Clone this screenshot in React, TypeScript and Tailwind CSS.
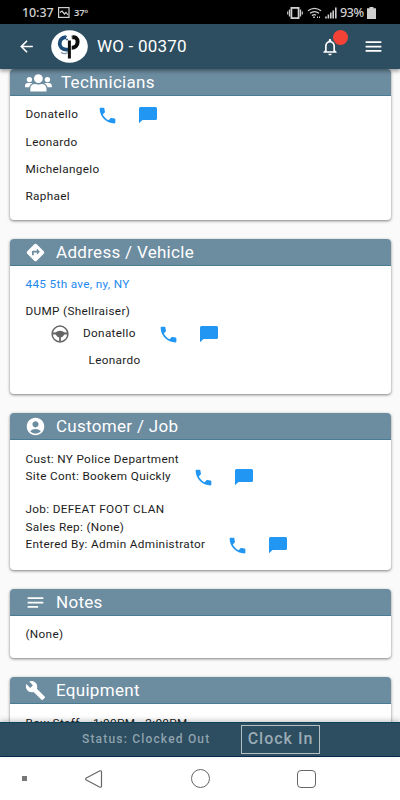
import type { ReactNode } from 'react'
import {
  MdAccountCircle,
  MdArrowBack,
  MdBuild,
  MdDirections,
  MdLocalPhone,
  MdMenu,
  MdNotes,
  MdNotificationsNone,
} from 'react-icons/md'

const technicians = ['Leonardo', 'Michelangelo', 'Raphael']

function ContactActions() {
  return (
    <div className="flex items-center gap-[21px] text-[#2196f3]">
      <button aria-label="Call">
        <MdLocalPhone className="w-[21px] h-[21px]" />
      </button>
      <button aria-label="Message">
        <svg width="18" height="17" viewBox="0 0 18 17" fill="currentColor">
          <path d="M1.5 0h15A1.500 1.500 0 0 1 18 1.500v10a1.500 1.500 0 0 1-1.500 1.500H3.500L0 16.300V1.500A1.500 1.500 0 0 1 1.500 0z" />
        </svg>
      </button>
    </div>
  )
}

function Card({ icon, title, className = '', children }: {
  icon: ReactNode
  title: string
  className?: string
  children: ReactNode
}) {
  return (
    <section className={`shrink-0 flex flex-col bg-white rounded overflow-hidden shadow-[0_1px_3px_rgba(0,0,0,0.5)] ${className}`}>
      <header className="h-[27px] shrink-0 flex items-center gap-2.5 bg-[#6c8c9f] border-b border-[#497b93] text-white pl-[15px]">
        {icon}
        <h2 className="text-[17px] leading-[26px] tracking-[0.3px] whitespace-nowrap">{title}</h2>
      </header>
      {children}
    </section>
  )
}

function UsersIcon() {
  return (
    <svg width="27" height="18" viewBox="0 0 27 18" fill="currentColor" className="mt-0.5 -mr-px">
      <circle cx="13.4" cy="4.6" r="4.4" />
      <circle cx="4.4" cy="5.6" r="2.7" />
      <circle cx="22.4" cy="5.6" r="2.7" />
      <path d="M5.3 17.5v-2.4c0-3.4 2-5.1 4.6-5.1 1 0 1.700.6 3.500.6s2.500-.6 3.500-.6c2.600 0 4.600 1.700 4.600 5.100v2.400z" />
      <path d="M0 13.300v-1.800C0 9.800 1.200 8.900 2.700 8.900h3.500c.5 0 .9.1 1.300.3-1.700.9-2.900 2.300-3.200 4.100zM26.800 13.300v-1.800c0-1.700-1.200-2.600-2.700-2.600h-3.500c-.5 0-.9.1-1.300.3 1.700.9 2.900 2.300 3.200 4.100z" />
    </svg>
  )
}

function SteeringWheelIcon() {
  return (
    <svg width="18" height="18" viewBox="0 0 18 18" fill="none" stroke="#666" className="shrink-0 -mt-px">
      <circle cx="9" cy="9" r="7.900" strokeWidth="1.500" />
      <path d="M4.300 7.600Q9 4 13.700 7.600L13 10Q11.600 12.600 9 12.600T5 10z" fill="#666" stroke="none" />
      <path d="M1.500 8.500h4M12.500 8.500h4M9 12v4.500" strokeWidth="1.800" />
    </svg>
  )
}

function Logo() {
  return (
    <svg width="37" height="33" viewBox="0 0 37 33" className="shrink-0">
      <ellipse cx="18.500" cy="16.500" rx="18.300" ry="16.200" fill="#fff" />
      <path d="M15 7.200C10.500 7.500 8.700 10.500 8.700 13.600s2.300 5.800 6.300 6h2" fill="none" stroke="#1e4c78" strokeWidth="3.800" />
      <path d="M10 22.300Q13.500 25 17 22.500" fill="none" stroke="#7d95aa" strokeWidth="1.200" />
      <path d="M14.500 6.500h1.500M15 9.500h2" stroke="#4a6c8e" strokeWidth="1.300" />
      <path d="M20.500 7.400c4-.8 6.100 1 6.100 4.400s-2.600 6-5.900 6" fill="none" stroke="#0b0b0b" strokeWidth="4" />
      <path d="M18.400 10.500v18" stroke="#111" strokeWidth="3" />
      <path d="M20.800 4.800v5.500" stroke="#fff" strokeWidth="0.800" />
    </svg>
  )
}

function StatusBar() {
  return (
    <div className="h-6 shrink-0 bg-black text-[#d0d0d0] flex items-center justify-between pl-[22px] pr-6 font-['Noto_Sans',sans-serif]">
      <div className="flex items-center pt-px">
        <span className="text-[12.500px] leading-6 font-medium w-[31px] whitespace-nowrap tracking-[-0.1px]">10:37</span>
        <svg width="12" height="11" viewBox="0 0 12 11" fill="none" stroke="currentColor" strokeWidth="1.200" className="ml-[5px]">
          <rect x="0.600" y="0.600" width="10.400" height="9.800" />
          <path d="M2 5.500l2-1.500 2.500 3L8 5.500l2 2.500" />
        </svg>
        <span className="ml-1 text-[9.500px] leading-6 font-semibold tracking-[-0.3px]">37°</span>
      </div>
      <div className="flex items-center pt-px">
        <svg width="16" height="12" viewBox="0 0 16 12" fill="none" stroke="currentColor" className="mr-px">
          <rect x="4.400" y="0.900" width="7.200" height="10.200" strokeWidth="1.800" />
          <path d="M2.500 2.500v7M13.500 2.500v7" strokeWidth="1.300" />
          <path d="M.7 4.500v3M15.300 4.500v3" strokeWidth="1.100" />
        </svg>
        <svg width="15" height="12" viewBox="0 0 15 12" fill="none" stroke="currentColor" strokeWidth="1.300" className="ml-[3px]">
          <path d="M1 3.800Q7.500-1.200 14 3.800M3 6.300Q7.500 2.800 12 6.300M5 8.600Q7.500 6.800 9 8.200" />
          <path d="M6.200 10.300h1.600M10 10.300h1M12 10.300h1" strokeWidth="1.600" />
        </svg>
        <svg width="12" height="12" viewBox="0 0 12 12" stroke="currentColor" strokeWidth="1.600" className="ml-[3px]">
          <path d="M1 11.500v-2M3.400 11.500V7.500M5.800 11.500v-6M8.200 11.500v-8M10.800 11.500V.5" />
        </svg>
        <span className="ml-[3px] text-[12.500px] leading-6 font-medium w-[24px] whitespace-nowrap tracking-[-0.400px]">93%</span>
        <svg width="9" height="12" viewBox="0 0 9 12" fill="currentColor" className="ml-[3px]">
          <path d="M2.500 0h4v1.200H9V12H0V1.200h2.500z" />
        </svg>
      </div>
    </div>
  )
}

export default function App() {
  return (
    <div className="w-[400px] h-[800px] flex flex-col overflow-hidden bg-[#fafafa] font-[Roboto,sans-serif] text-[11.750px] tracking-[0.330px] text-[#1c1c1c]">
      <StatusBar />

      {/* App bar */}
      <div className="relative z-10 h-[45px] shrink-0 flex items-center bg-[#2d4d60] text-white pl-[17px] pr-4 shadow-[0_2px_4px_rgba(0,0,0,0.4)]">
        <MdArrowBack className="w-[19px] h-[19px]" />
        <div className="ml-[15px]">
          <Logo />
        </div>
        <h1 className="ml-[9px] text-[17px] tracking-[0.2px] whitespace-nowrap">WO - 00370</h1>
        <div className="relative ml-auto">
          <MdNotificationsNone className="w-5 h-5" />
          <span className="absolute -top-[7px] left-[13px] w-[15px] h-[15px] rounded-full bg-[#f44336]" />
        </div>
        <MdMenu className="w-[21px] h-[21px] ml-[23px]" />
      </div>

      {/* Cards */}
      <main className="flex-1 min-h-0 overflow-hidden flex flex-col gap-[19px] pl-2.5 pr-[9px]">
        <Card icon={<UsersIcon />} title="Technicians" className="h-[151px]">
          <div className="pt-[5px] pl-[15.500px]">
            <div className="h-7 flex items-center">
              <span className="w-[71.500px]">Donatello</span>
              <ContactActions />
            </div>
            {technicians.map(name => (
              <div key={name} className="h-[27px] flex items-center">{name}</div>
            ))}
          </div>
        </Card>

        <Card icon={<MdDirections className="w-[21px] h-[21px]" />} title="Address / Vehicle" className="h-[155px]">
          <div className="pt-[5px] pl-[15.500px]">
            <div className="h-[27px] flex items-center text-[#2389ee]">445 5th ave, ny, NY</div>
            <div className="h-[27px] flex items-center">DUMP (Shellraiser)</div>
            <div className="h-[18px] flex items-center pl-[25.500px]">
              <SteeringWheelIcon />
              <span className="ml-3.5 w-[75px]">Donatello</span>
              <ContactActions />
            </div>
            <div className="h-9 flex items-center pl-[63px]">Leonardo</div>
          </div>
        </Card>

        <Card icon={<MdAccountCircle className="w-[21px] h-[21px]" />} title="Customer / Job" className="h-[157px]">
          <div className="pt-[11px] pl-[15.500px] whitespace-nowrap">
            <div className="h-[17px] flex items-center">Cust: NY Police Department</div>
            <div className="h-[18px] flex items-center">
              <span className="w-[167.500px]">Site Cont: Bookem Quickly</span>
              <ContactActions />
            </div>
            <div className="h-[18px] flex items-center mt-[15px]">Job: DEFEAT FOOT CLAN</div>
            <div className="h-[17px] flex items-center">Sales Rep: (None)</div>
            <div className="h-[18px] flex items-center">
              <span className="w-[201.500px]">Entered By: Admin Administrator</span>
              <ContactActions />
            </div>
          </div>
        </Card>

        <Card icon={<MdNotes className="w-[21px] h-[21px]" />} title="Notes" className="h-[69px]">
          <div className="pt-[5px] pl-[15.500px]">
            <div className="h-[27px] flex items-center">(None)</div>
          </div>
        </Card>

        <Card icon={<MdBuild className="w-[21px] h-[21px]" />} title="Equipment" className="h-[120px]">
          <div className="pt-1.5 pl-[15.500px]">
            <div className="h-[27px] flex items-center whitespace-pre">Bow Staff -  1:00PM - 2:00PM</div>
          </div>
        </Card>
      </main>

      {/* Clock bar */}
      <div className="relative z-10 h-[35px] shrink-0 flex items-center bg-[#2d4d60] border-t border-b border-t-[#0c4359] border-b-[#06294d] text-[#9aabb4] font-medium pl-[82px] shadow-[0_-2px_5px_rgba(0,0,0,0.2)]">
        <span className="w-[159px] -mt-0.5 text-[12px] tracking-[1.180px] whitespace-nowrap text-[#8fa3ae]">Status: Clocked Out</span>
        <button className="w-[79px] h-[29px] -mt-px pb-px border border-[#b3bfc3] text-[16px] leading-none font-medium tracking-[1px] whitespace-nowrap">Clock In</button>
      </div>

      {/* Android navigation */}
      <nav className="h-[43px] shrink-0 bg-white flex items-center pl-[22px] text-[#666]">
        <span className="w-[5px] h-[5px] bg-[#777]" />
        <svg width="18" height="18" viewBox="0 0 18 18" fill="none" stroke="currentColor" strokeWidth="1.200" strokeLinejoin="round" className="ml-[58px]">
          <path d="M1.300 8L14.500 1Q16.500.2 16.500 2v14q0 1.800-2 1L1.300 10Q0 9 1.300 8z" />
        </svg>
        <span className="ml-[88px] w-[19px] h-[19px] rounded-full border border-current" />
        <span className="ml-[87px] w-[19px] h-[18px] rounded-sm border border-current" />
      </nav>
    </div>
  )
}
